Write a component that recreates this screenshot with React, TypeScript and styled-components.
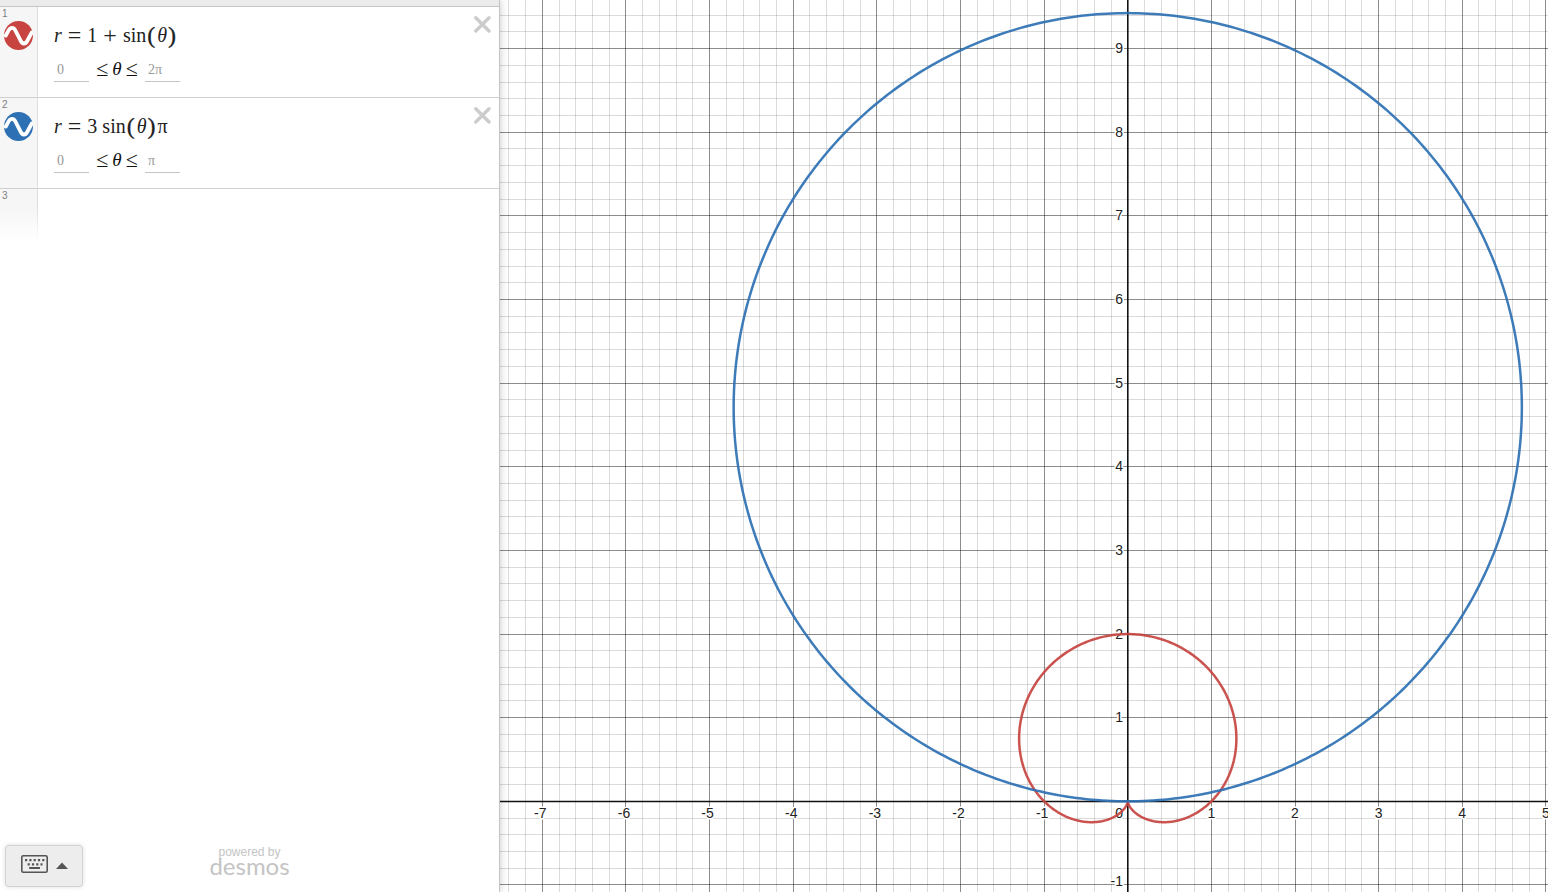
import React from "react";
import styled, { createGlobalStyle } from "styled-components";

const GlobalStyle = createGlobalStyle`
  *, *::before, *::after { box-sizing: border-box; }
  body { margin: 0; background: #fff; }
`;

const SERIF = '"Liberation Serif", "Times New Roman", serif';
const SANS = '"Liberation Sans", Arial, sans-serif';

const Calculator = styled.main`
  display: grid;
  grid-template-columns: 500px minmax(0, 1fr);
  height: 100vh;
  overflow: hidden;
  font-family: ${SANS};
`;

const Panel = styled.section`
  display: flex;
  flex-direction: column;
  min-height: 0;
  z-index: 1;
  background: #fff;
  border-right: 1px solid #c4c4c4;
  box-shadow: 0 0 8px rgba(0, 0, 0, 0.22);
`;

const TopBar = styled.header`
  flex: none;
  height: 7px;
  background: #ebebeb;
  border-bottom: 1px solid #c6c6c6;
`;

const ExpressionList = styled.ol`
  list-style: none;
  margin: 0;
  padding: 0;
  overflow: hidden;
`;

const Row = styled.li`
  display: flex;
  min-height: 91px;
  border-bottom: 1px solid #d0d0d0;
`;

const EmptyRow = styled.li`
  display: flex;
  min-height: 52px;
`;

const Gutter = styled.div<{ $fade?: boolean }>`
  display: flex;
  flex-direction: column;
  flex: none;
  width: 38px;
  padding: 1px 0 0 2px;
  background: ${(p) => (p.$fade ? "linear-gradient(#f6f6f6 40%, #fff)" : "#f6f6f6")};
  border-right: 1px solid;
  border-image: ${(p) => (p.$fade ? "linear-gradient(#e0e0e0 40%, #fff) 1" : "linear-gradient(#e0e0e0, #e0e0e0) 1")};
`;

const Index = styled.span`
  font-size: 10px;
  line-height: 11px;
  color: #808080;
`;

const CurveToggle = styled.button`
  width: 29px;
  height: 29px;
  margin: 2px 0 0 2px;
  padding: 0;
  border: 0;
  background: none;

  svg { display: block; }
`;

const Body = styled.div`
  flex: 1;
  padding: 12px 0 0 16px;
`;

const Formula = styled.div`
  display: flex;
  align-items: center;
  height: 32px;
  font-family: ${SERIF};
  font-size: 20px;
  line-height: 32px;
  color: #222;
  white-space: pre;
`;

const Operator = styled.span`
  margin: 0 6px;
  font-size: 24px;
`;

const Func = styled.span<{ $spaced?: boolean }>`
  margin-right: 1px;
  margin-left: ${(p) => (p.$spaced ? "5px" : "0")};
`;

const Paren = styled.span`
  font-size: 24px;
  -webkit-text-stroke: 0.3px #111;
`;

const Theta = styled.i`
  margin: 0 1px 0 2px;
`;

const Constant = styled.span`
  margin-left: 2px;
`;

const Domain = styled.div`
  display: flex;
  align-items: center;
  height: 28px;
  margin-top: 5px;
  font-family: ${SERIF};
  font-size: 19px;
  color: #111;
`;

const Bound = styled.input`
  width: 35px;
  height: 24px;
  padding: 0 3px;
  border: 0;
  border-bottom: 1px solid #c4c4c4;
  background: none;
  font-family: ${SERIF};
  font-size: 14px;
  color: #999;
  outline: none;
`;

const Inequality = styled.span`
  display: flex;
  align-items: center;
  justify-content: center;
  gap: 4px;
  width: 56px;
  height: 28px;
  line-height: 24px;
  padding-bottom: 2px;
`;

const LessEqual = styled.span`
  font-size: 22px;
`;

const DeleteButton = styled.button`
  flex: none;
  width: 18px;
  height: 18px;
  margin: 8px 8px 0 0;
  padding: 0;
  border: 0;
  background: none;

  svg { display: block; }
`;

const Footer = styled.footer`
  display: grid;
  grid-template-columns: 1fr auto 1fr;
  align-items: end;
  margin-top: auto;
  padding: 0 5px;
`;

const KeypadButton = styled.button`
  display: flex;
  align-items: center;
  justify-content: center;
  gap: 8px;
  width: 78px;
  height: 42px;
  margin-bottom: 5px;
  padding: 0 0 5px;
  background: #ededed;
  border: 1px solid #d2d2d2;
  border-radius: 4px;
  box-shadow: 0 0 4px rgba(0, 0, 0, 0.14);
`;

const Caret = styled.svg`
  margin-top: 3px;
`;

const Brand = styled.a`
  display: flex;
  flex-direction: column;
  align-items: center;
  padding-bottom: 18px;
  color: #c4c4c4;
  text-decoration: none;
`;

const PoweredBy = styled.span`
  font-size: 12px;
  line-height: 12px;
`;

const Wordmark = styled.span`
  font-family: Lato, ${SANS};
  font-size: 24px;
  line-height: 16px;
`;

const GraphArea = styled.section`
  min-width: 0;
  min-height: 0;
  overflow: hidden;

  svg { display: block; width: 100%; height: 100%; }
`;

const TickLabel = styled.text`
  font-family: ${SANS};
  font-size: 14px;
  fill: #222;
  stroke: #fff;
  stroke-width: 3px;
  stroke-linejoin: round;
  paint-order: stroke;
`;

const RED = "#c74440";
const BLUE = "#2d70b3";

const VIEW = { width: 1048, height: 892 };
const ORIGIN = { x: 627.75, y: 801.3 };
const UNIT = 83.63;

type Curve = { color: string; end: number; r: (t: number) => number };

const curves: Curve[] = [
  { color: RED, end: 2 * Math.PI, r: (t) => 1 + Math.sin(t) },
  { color: BLUE, end: Math.PI, r: (t) => 3 * Math.sin(t) * Math.PI },
];

function polarPath({ r, end }: Curve) {
  const steps = 480;
  const points: string[] = [];
  for (let i = 0; i <= steps; i++) {
    const t = (end * i) / steps;
    const x = ORIGIN.x + UNIT * r(t) * Math.cos(t);
    const y = ORIGIN.y - UNIT * r(t) * Math.sin(t);
    points.push(`${x.toFixed(2)},${y.toFixed(2)}`);
  }
  return "M" + points.join("L");
}

const snap = (v: number) => Math.floor(v) + 0.5;

function gridPath(major: boolean) {
  let d = "";
  for (let i = -60; i <= 60; i++) {
    if ((i % 5 === 0) !== major || i === 0) continue;
    const x = snap(ORIGIN.x + (i * UNIT) / 5);
    const y = snap(ORIGIN.y - (i * UNIT) / 5);
    if (x > 0 && x < VIEW.width) d += `M${x},0V${VIEW.height}`;
    if (y > 0 && y < VIEW.height) d += `M0,${y}H${VIEW.width}`;
  }
  return d;
}

const xTicks = [-7, -6, -5, -4, -3, -2, -1, 1, 2, 3, 4, 5];
const yTicks = [-1, 1, 2, 3, 4, 5, 6, 7, 8, 9];

function Graph() {
  return (
    <svg
      viewBox={`0 0 ${VIEW.width} ${VIEW.height}`}
      preserveAspectRatio="xMidYMid slice"
      role="img"
      aria-label="Polar graph"
    >
      <path d={gridPath(false)} stroke="#000" strokeOpacity={0.14} />
      <path d={gridPath(true)} stroke="#000" strokeOpacity={0.45} />
      <path d={`M0,801.5H${VIEW.width}`} stroke="#111" strokeWidth={1.6} />
      <path d={`M627.8,0V${VIEW.height}`} stroke="#111" strokeWidth={1.6} />
      {xTicks.map((n) => (
        <TickLabel key={n} x={ORIGIN.x + n * UNIT - (n < 0 ? 2 : 0)} y={818} textAnchor="middle">
          {n}
        </TickLabel>
      ))}
      <TickLabel x={623} y={818} textAnchor="end">0</TickLabel>
      {yTicks.map((n) => (
        <TickLabel key={n} x={623} y={Math.min(Math.floor(ORIGIN.y - n * UNIT) + 5, 886)} textAnchor="end">
          {n}
        </TickLabel>
      ))}
      {curves.map((c) => (
        <path
          key={c.color}
          d={polarPath(c)}
          fill="none"
          stroke={c.color}
          strokeWidth={2.5}
          strokeOpacity={0.92}
          strokeLinejoin="round"
        />
      ))}
    </svg>
  );
}

function CurveIcon({ color }: { color: string }) {
  return (
    <svg width="29" height="29" viewBox="0 0 29 29">
      <circle cx="14.5" cy="14.5" r="14.5" fill={color} />
      <path
        d="M1.8 14.5L4.6 9.4C6.4 6.2 9.4 6 11.2 9.2L16.6 19.6C18.4 23.4 21.4 23.4 23.2 20L27.8 11.4"
        fill="none"
        stroke="#fff"
        strokeWidth="3.8"
        strokeLinecap="round"
      />
    </svg>
  );
}

type ExpressionProps = {
  index: number;
  color: string;
  upper: string;
  children: React.ReactNode;
};

function Expression({ index, color, upper, children }: ExpressionProps) {
  return (
    <Row>
      <Gutter>
        <Index>{index}</Index>
        <CurveToggle aria-label={`Hide curve ${index}`}>
          <CurveIcon color={color} />
        </CurveToggle>
      </Gutter>
      <Body>
        <Formula>{children}</Formula>
        <Domain>
          <Bound aria-label={`Lower bound of theta, expression ${index}`} defaultValue="0" />
          <Inequality>
            <LessEqual>≤</LessEqual>
            <i>θ</i>
            <LessEqual>≤</LessEqual>
          </Inequality>
          <Bound aria-label={`Upper bound of theta, expression ${index}`} defaultValue={upper} />
        </Domain>
      </Body>
      <DeleteButton aria-label={`Delete expression ${index}`}>
        <svg width="18" height="18" viewBox="0 0 18 18">
          <path d="M2.8 2.8L16 16M16 2.8L2.8 16" stroke="#ccc" strokeWidth="3.4" strokeLinecap="round" />
        </svg>
      </DeleteButton>
    </Row>
  );
}

function KeyboardIcon() {
  return (
    <svg width="27" height="18" viewBox="0 0 27 18" fill="none" stroke="#555">
      <rect x="0.8" y="0.8" width="25.4" height="16.4" rx="1.5" strokeWidth="1.6" />
      <path d="M4 5.2H23.5M6.6 9.3H21.5" strokeWidth="2.2" strokeDasharray="2.2 2.1" />
      <path d="M8.2 13H19" strokeWidth="2" />
    </svg>
  );
}

export default function App() {
  return (
    <>
      <GlobalStyle />
      <Calculator>
        <Panel aria-label="Expressions">
          <TopBar />
          <ExpressionList>
            <Expression index={1} color={RED} upper="2π">
              <i>r</i>
              <Operator>=</Operator>1<Operator>+</Operator>
              <Func>sin</Func>
              <Paren>(</Paren>
              <Theta>θ</Theta>
              <Paren>)</Paren>
            </Expression>
            <Expression index={2} color={BLUE} upper="π">
              <i>r</i>
              <Operator>=</Operator>3
              <Func $spaced>sin</Func>
              <Paren>(</Paren>
              <Theta>θ</Theta>
              <Paren>)</Paren>
              <Constant>π</Constant>
            </Expression>
            <EmptyRow>
              <Gutter $fade>
                <Index>3</Index>
              </Gutter>
            </EmptyRow>
          </ExpressionList>
          <Footer>
            <KeypadButton aria-label="Show keypad">
              <KeyboardIcon />
              <Caret width="12" height="7" viewBox="0 0 12 7">
                <path d="M6 0.5L12 7H0Z" fill="#555" />
              </Caret>
            </KeypadButton>
            <Brand href="#desmos">
              <PoweredBy>powered by</PoweredBy>
              <Wordmark>desmos</Wordmark>
            </Brand>
          </Footer>
        </Panel>
        <GraphArea>
          <Graph />
        </GraphArea>
      </Calculator>
    </>
  );
}
